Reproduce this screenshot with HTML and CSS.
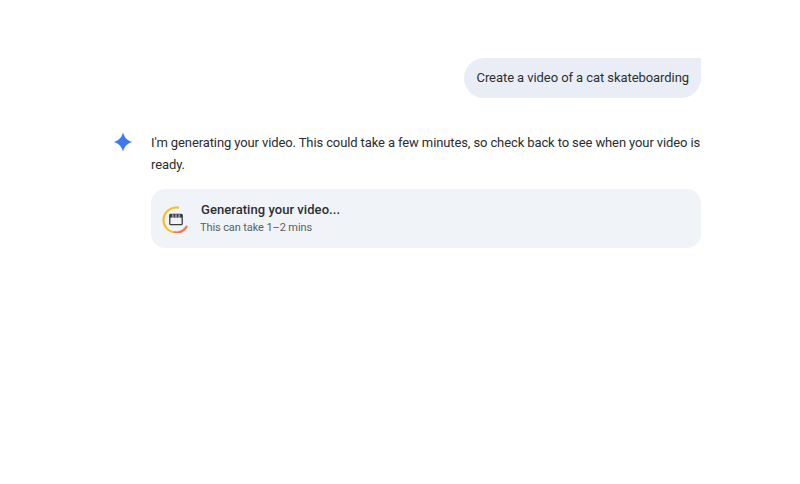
FILE: index.html
```html
<!DOCTYPE html>
<html lang="en">
<head>
    <meta charset="UTF-8">
    <meta name="viewport" content="width=device-width, initial-scale=1.0">
    <title>Gemini</title>
    <link rel="stylesheet" href="styles.css">
</head>
<body>
    <div class="chat">
        <div class="user-row">
            <div class="user-bubble">Create a video of a cat skateboarding</div>
        </div>
        <div class="reply">
            <svg class="spark" viewBox="0 0 20 20" width="20" height="20">
                <path fill="#3b7bf0" d="M10 0.5C11.4 5.6 14.4 8.6 19.5 10C14.4 11.4 11.4 14.4 10 19.5C8.6 14.4 5.6 11.4 0.5 10C5.6 8.6 8.6 5.6 10 0.5Z"/>
            </svg>
            <div class="reply-body">
                <p class="reply-text">I'm generating your video. This could take a few minutes, so check back to see when your video is ready.</p>
                <div class="status-card">
                    <div class="status-icon">
                        <svg viewBox="0 0 28 28" width="28" height="28" fill="none">
                            <path d="M16 2.66A12.5 12.5 0 1 0 13 27.46" stroke="#f6bf26" stroke-width="2.2" stroke-linecap="round"/>
                            <path d="M13 27.46A12.5 12.5 0 0 0 24.6 21.6" stroke="#ea7a4f" stroke-width="2.2" stroke-linecap="round"/>
                            <rect x="7.8" y="9.3" width="12.4" height="10.4" rx="1" stroke="#3a3d42" stroke-width="1.3"/>
                            <path d="M7.8 9.3H20.2V12.6H7.8Z" fill="#3a3d42"/>
                            <path d="M10.9 9.3V12.6M14 9.3V12.6M17.1 9.3V12.6" stroke="#eef1f7" stroke-width="0.9"/>
                        </svg>
                    </div>
                    <div class="status-text">
                        <div class="status-title">Generating your video...</div>
                        <div class="status-sub">This can take 1–2 mins</div>
                    </div>
                </div>
            </div>
        </div>
    </div>
</body>
</html>
```

FILE: styles.css
```css
body {
    margin: 0;
    background-color: #fff;
    font-family: Roboto, "Liberation Sans", sans-serif;
    color: #1f1f1f;
}
.chat {
    width: 587px;
    margin-left: 114px;
    padding-top: 58px;
}
.user-row {
    display: flex;
    justify-content: flex-end;
}
.user-bubble {
    background-color: #e9eef6;
    border-radius: 20px 0 20px 20px;
    padding: 0 12px 0 13px;
    height: 40px;
    line-height: 39px;
    font-size: 13px;
    letter-spacing: -0.07px;
    color: #2b2e33;
}
.reply {
    display: flex;
    margin-top: 34px;
}
.spark {
    flex: none;
    margin-left: -1px;
    margin-right: 18px;
}
.reply-body {
    flex: 1;
}
.reply-text {
    margin: 0;
    font-size: 13px;
    line-height: 22px;
    letter-spacing: -0.11px;
    color: #2a2c2f;
}
.status-card {
    display: flex;
    align-items: center;
    height: 59px;
    margin-top: 13px;
    background-color: #f0f4f9;
    border-radius: 14px;
    padding-left: 11px;
}
.status-icon {
    display: flex;
    margin-right: 11px;
}
.status-title {
    font-size: 13px;
    font-weight: 500;
    line-height: 18px;
    letter-spacing: 0.05px;
    color: #2c2e32;
}
.status-sub {
    margin-top: 1px;
    margin-left: -1px;
    font-size: 11px;
    line-height: 16px;
    letter-spacing: -0.1px;
    color: #5a5e63;
}
```
